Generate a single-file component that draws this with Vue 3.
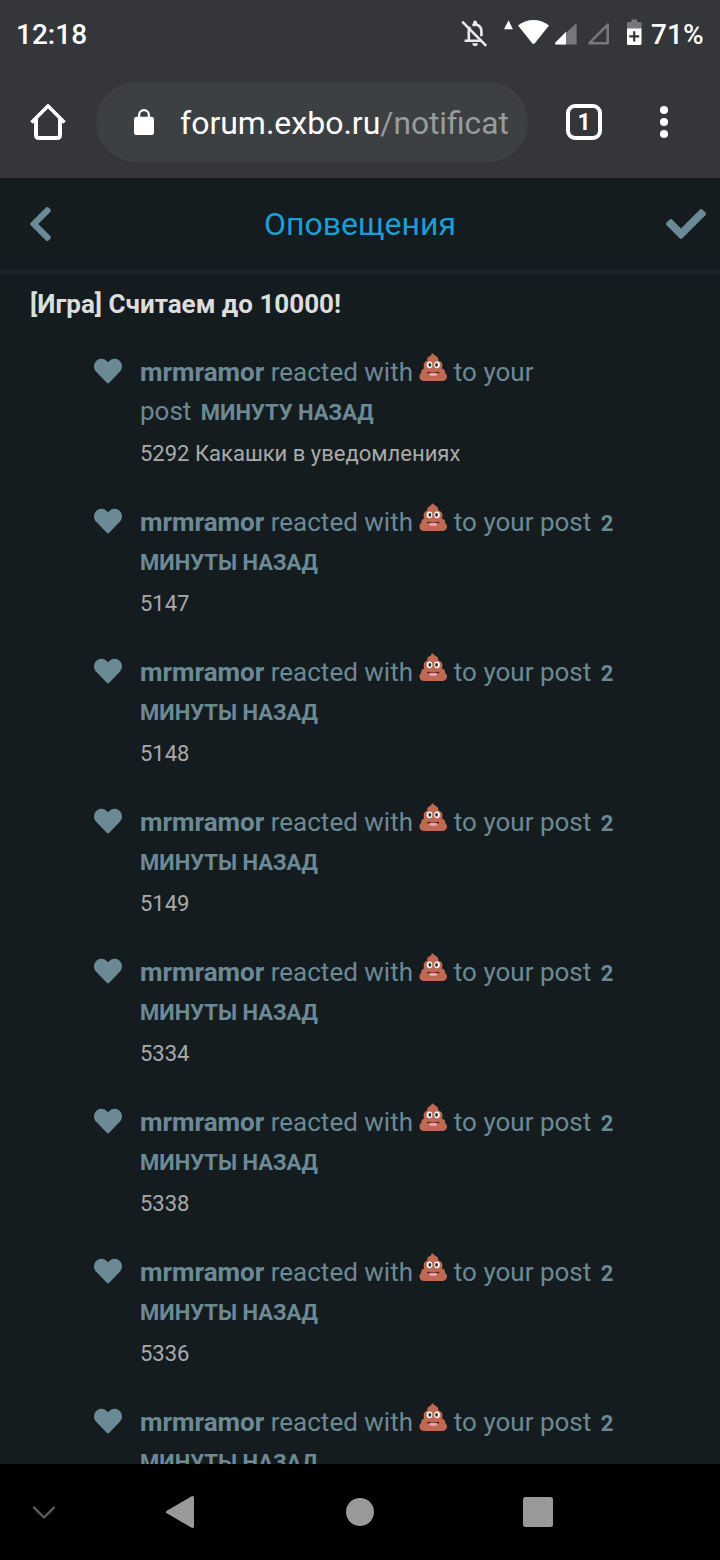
<script setup>
const notifications = [
  { id: 1, time: 'минуту назад', excerpt: '5292 Какашки в уведомлениях' },
  { id: 2, time: '2 минуты назад', excerpt: '5147' },
  { id: 3, time: '2 минуты назад', excerpt: '5148' },
  { id: 4, time: '2 минуты назад', excerpt: '5149' },
  { id: 5, time: '2 минуты назад', excerpt: '5334' },
  { id: 6, time: '2 минуты назад', excerpt: '5338' },
  { id: 7, time: '2 минуты назад', excerpt: '5336' },
  { id: 8, time: '2 минуты назад', excerpt: '' },
]
</script>

<template>
  <div class="phone">
    <div class="status">
      <span class="clock">12:18</span>
      <svg class="status-icons" viewBox="0 0 184 40" width="184" height="40">
        <g fill="none" stroke="#e8eaed" stroke-width="2.6">
          <path d="M8.800 27V17.200q0-2.500 1.300-4.200M12.500 11.300c4.500-2 8.900 1 8.900 5.900v5M4.600 26.800h17" />
          <path d="M2.200 7.600l24 24.300" />
        </g>
        <path d="M13.200 10.500v-2.200a1.900 1.900 0 0 1 3.800 0v2.200zM12.300 29.300h5.600a2.800 2.800 0 0 1-5.600 0z" fill="#e8eaed" />
        <path d="M44 15.300l4.600-9 4.300 9z" fill="#fff" />
        <path d="M58 11.500C66.500 4 80.500 4 89 11.500L74.800 29.300q-1.300 1.500-2.600 0z" fill="#fff" />
        <path d="M116.600 9v21.500H96.500q-2.500-.2-1-2z" fill="#77787b" />
        <path d="M106 17.800v12.700H96.500q-2.500-.2-1-2z" fill="#fff" />
        <path d="M147.700 10.600v18.600h-18.300z" fill="none" stroke="#77787b" stroke-width="2.600" stroke-linejoin="round" />
        <path d="M171.500 5.600h5.500v2.500h3.600q.900 0 .900.900v6h-14.500v-6q0-.900.900-.900h3.600z" fill="#77787b" />
        <path d="M167 14.500h14.500v15.200q0 1.300-1.300 1.300h-11.900q-1.300 0-1.300-1.300z" fill="#fff" />
        <path d="M174.200 17.200v10.200M169.200 22.300h10" stroke="#35363a" stroke-width="2.200" />
      </svg>
      <span class="battery">71%</span>
    </div>

    <div class="toolbar">
      <svg class="home" viewBox="0 0 40 40" width="40" height="40">
        <path d="M3.500 20.500L20 4l16.500 16.500" fill="none" stroke="#fff" stroke-width="3.600" stroke-linejoin="miter" />
        <path d="M8 16.500V33q0 3 3 3h18q3 0 3-3V16.500" fill="none" stroke="#fff" stroke-width="4" />
      </svg>
      <div class="omnibox">
        <svg class="lock" viewBox="0 0 20 28" width="20" height="28">
          <path d="M5.100 10.500V7a4.900 4.900 0 0 1 9.800 0v3.500" fill="none" stroke="#fff" stroke-width="2.200" />
          <rect y="8.800" width="20" height="18.200" rx="2.600" fill="#fff" />
        </svg>
        <span class="url">forum.exbo.ru<span class="path">/notificat</span></span>
      </div>
      <div class="tabs">1</div>
      <div class="menu"><i></i><i></i><i></i></div>
    </div>

    <header class="header">
      <svg class="chevron" viewBox="0 0 320 512" width="25" height="40">
        <path fill="currentColor" d="M34.520 239.030L228.870 44.690c9.370-9.370 24.570-9.370 33.940 0l22.670 22.670c9.360 9.360 9.370 24.520.040 33.900L131.490 256l154.020 154.750c9.340 9.380 9.320 24.540-.040 33.900l-22.670 22.670c-9.370 9.370-24.570 9.370-33.940 0L34.520 272.970c-9.370-9.370-9.370-24.570 0-33.940z" />
      </svg>
      <h1>Оповещения</h1>
      <svg viewBox="0 0 512 512" width="40" height="40">
        <path fill="currentColor" d="M173.898 439.404l-166.400-166.400c-9.997-9.997-9.997-26.206 0-36.204l36.203-36.204c9.997-9.998 26.207-9.998 36.204 0L192 312.690 432.095 72.596c9.997-9.997 26.207-9.997 36.204 0l36.203 36.204c9.997 9.997 9.997 26.206 0 36.204l-294.400 294.401c-9.998 9.997-26.207 9.997-36.204-.001z" />
      </svg>
    </header>

    <main class="content">
      <h2>[Игра] Считаем до 10000!</h2>
      <ul>
        <li v-for="n in notifications" :key="n.id">
          <svg class="heart" viewBox="0 0 512 512" width="28" height="28">
            <path fill="currentColor" d="M462.300 62.600C407.500 15.900 326 24.300 275.700 76.200L256 96.500l-19.700-20.300C186.100 24.300 104.500 15.900 49.700 62.600c-62.800 53.600-66.100 149.800-9.900 207.900l193.500 199.800c12.500 12.900 32.800 12.900 45.300 0l193.500-199.800c56.300-58.100 53-154.300-9.800-207.900z" />
          </svg>
          <div class="body">
            <p class="message">
              <strong>mrmramor</strong> reacted with
              <svg class="emoji" viewBox="0 0 28 28" width="28" height="28">
                <path d="M12.600.300c1.500.1 2 1.400 3.500 2.300 2.400 1.200 3.600 2.700 3.200 4.800 3.400.8 4.800 3.700 3.900 6.800l-.5 1.400c2.700.6 3.800 2.300 3.500 4.600 1.700 1 2.200 3 1.600 4.700-.8 2.100-2.600 3.100-5 3.100H5.400C2.600 28 .700 26.400.500 24c-.1-2 .5-3.200 1.700-4.100-.2-2.300.8-3.800 3-4.400-1.500-3.800.1-7.200 3.200-8-.5-2 .1-3.500 2.200-4.200 1.300-.5 2.100-1.500 2-3z" fill="#bf6952" />
                <ellipse cx="10.500" cy="11.800" rx="2.900" ry="3.400" fill="#f5f8fa" />
                <ellipse cx="18" cy="11.800" rx="2.900" ry="3.400" fill="#f5f8fa" />
                <ellipse cx="10.900" cy="11.800" rx="1.400" ry="1.900" fill="#292f33" />
                <ellipse cx="17.500" cy="11.800" rx="1.400" ry="1.900" fill="#292f33" />
                <path d="M8.700 18.700q5.500.8 11 0 .8 0 .6.900c-.8 2.400-3 3.700-6.100 3.700s-5.300-1.300-6.100-3.700q-.2-.9.600-.9z" fill="#5a2a20" />
                <path d="M9 21.100c1.500-1 3.200-1.400 5.200-1.400s3.700.4 5.200 1.400c-1.100 1.500-2.900 2.200-5.200 2.200s-4.100-.7-5.200-2.200z" fill="#f49ba8" />
              </svg>
              to your post&nbsp;<time>{{ n.time }}</time>
            </p>
            <p class="excerpt">{{ n.excerpt }}</p>
          </div>
        </li>
      </ul>
    </main>

    <nav class="navbar">
      <svg viewBox="0 0 720 96" width="720" height="96">
        <path d="M34 43.500l10 10 10-10" fill="none" stroke="#5e5e5e" stroke-width="2.300" stroke-linecap="round" stroke-linejoin="round" />
        <path d="M167.500 48L192.500 33.500V62.500z" fill="#999" stroke="#999" stroke-width="3" stroke-linejoin="round" />
        <circle cx="360" cy="48" r="14" fill="#999" />
        <rect x="523" y="33" width="30" height="30" rx="2.500" fill="#999" />
      </svg>
    </nav>
  </div>
</template>

<style>
body {
  background: #151c1f;
}
</style>

<style scoped>
.phone {
  display: flex;
  flex-direction: column;
  width: 720px;
  height: 1560px;
  overflow: hidden;
  background: #151c1f;
  color: #6b8a96;
  font-family: Roboto, "Noto Sans", sans-serif;
}
.phone svg {
  display: block;
  flex: none;
}
.status {
  flex: none;
  display: flex;
  align-items: center;
  height: 68px;
  padding: 0 16.500px 0 16px;
  background: #35363a;
  color: #fff;
  font-size: 28px;
  font-weight: 500;
}
.status-icons {
  margin-left: auto;
}
.battery {
  margin-left: 7.500px;
}
.toolbar {
  flex: none;
  display: flex;
  align-items: center;
  height: 110px;
  padding: 0 52px 2px 28px;
  box-sizing: border-box;
  background: #35363a;
  color: #fff;
}
.omnibox {
  display: flex;
  align-items: center;
  box-sizing: border-box;
  width: 432px;
  height: 80px;
  margin-left: 28px;
  padding-left: 38px;
  border-radius: 40px;
  background: #3c4043;
}
.url {
  margin-left: 26px;
  padding-top: 2px;
  font-size: 32px;
  white-space: nowrap;
}
.path {
  color: #9a9b9e;
  font-size: 31.7px;
}
.tabs {
  box-sizing: border-box;
  width: 36px;
  height: 36px;
  margin-left: 38px;
  border: 4px solid #fff;
  border-radius: 9px;
  font-size: 23px;
  font-weight: 700;
  line-height: 29px;
  text-align: center;
}
.menu {
  display: flex;
  flex-direction: column;
  gap: 4px;
  margin-left: auto;
}
.menu i {
  width: 8px;
  height: 8px;
  border-radius: 50%;
  background: #fff;
}
.header {
  flex: none;
  display: grid;
  grid-template-columns: 40px 1fr 40px;
  align-items: center;
  box-sizing: border-box;
  height: 96px;
  padding: 0 14px 0 27.500px;
  border-bottom: 4px solid #1c2529;
}
h1 {
  margin: 0;
  padding-right: 13.500px;
  color: #1a9fd4;
  font-size: 32px;
  font-weight: 400;
  text-align: center;
}
.content {
  flex: 1;
  min-height: 0;
  overflow: hidden;
}
h2 {
  margin: 0;
  padding-left: 30px;
  color: #ddd;
  font-size: 26px;
  font-weight: 700;
  line-height: 60px;
}
ul {
  margin: 0;
  padding: 18px 0 0;
  list-style: none;
}
li {
  display: flex;
  height: 150px;
  padding-left: 94px;
}
.heart {
  margin-top: 4.500px;
}
.body {
  width: 480px;
  margin-left: 18px;
}
p {
  margin: 0;
}
.message {
  padding-top: 1px;
  font-size: 26px;
  line-height: 39px;
}
.message .emoji {
  display: inline-block;
  vertical-align: 0;
  margin: -4px 0 0;
}
time {
  margin-left: 3px;
  font-size: 22px;
  font-weight: 700;
  line-height: 22px;
  text-transform: uppercase;
}
.excerpt {
  margin-top: 6px;
  color: #aaa;
  font-size: 22px;
  line-height: 34px;
}
.navbar {
  flex: none;
  height: 96px;
  background: #000;
}
</style>
